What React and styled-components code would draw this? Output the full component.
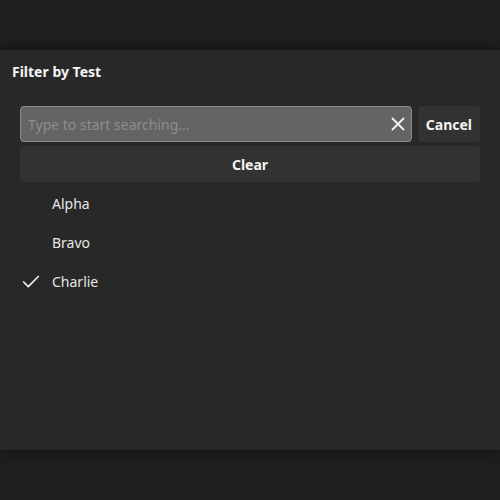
import React, { useState } from 'react';
import styled, { createGlobalStyle } from 'styled-components';
import { Check, X } from 'lucide-react';

const GlobalStyle = createGlobalStyle`
  html, body {
    margin: 0;
    padding: 0;
    background-color: #1f1f1f;
    font-family: "Noto Sans", "Open Sans", sans-serif;
  }
`;

const Page = styled.div`
  height: 100vh;
  display: flex;
  align-items: center;
`;

const Dialog = styled.div`
  width: 100%;
  height: 400px;
  background-color: #282828;
  box-shadow: 0 0 14px rgba(0, 0, 0, 0.55);
  display: flex;
  flex-direction: column;
`;

const Header = styled.div`
  padding: 12px 12px 12px;
`;

const Title = styled.h2`
  margin: 0;
  font-size: 14px;
  line-height: 20px;
  font-weight: 700;
  color: #f4f4f4;
`;

const Body = styled.div`
  padding: 12px 20px;
  display: flex;
  flex-direction: column;
`;

const SearchRow = styled.div`
  display: flex;
  gap: 6px;
`;

const InputWrap = styled.div`
  flex: 1;
  display: flex;
  align-items: center;
  height: 36px;
  box-sizing: border-box;
  background-color: #646464;
  border: 1px solid #8c8c8c;
  border-radius: 4px;
`;

const Input = styled.input`
  flex: 1;
  min-width: 0;
  height: 100%;
  background: transparent;
  border: none;
  outline: none;
  padding: 0 7px;
  font-family: inherit;
  font-size: 14px;
  color: #f0f0f0;

  &::placeholder {
    color: #8d8d8d;
  }
`;

const ClearIcon = styled.button`
  background: transparent;
  border: none;
  padding: 0;
  margin-right: 2px;
  width: 22px;
  height: 22px;
  display: flex;
  align-items: center;
  justify-content: center;
  color: #f2f2f2;
  cursor: pointer;
`;

const Button = styled.button`
  height: 36px;
  padding: 0 8px;
  margin-top: ${(p) => (p.$wide ? '4px' : '0')};
  background-color: #323232;
  border: none;
  border-radius: 4px;
  color: #f2f2f2;
  font-family: inherit;
  font-size: 14px;
  font-weight: 700;
  cursor: pointer;
  width: ${(p) => (p.$wide ? '100%' : 'auto')};
`;

const List = styled.ul`
  list-style: none;
  margin: 2px 0 0;
  padding: 0;
`;

const Item = styled.li`
  display: flex;
  align-items: center;
  height: 39px;
  font-size: 14px;
  color: #e6e6e6;
  cursor: pointer;
`;

const Mark = styled.span`
  width: 32px;
  display: flex;
  align-items: center;
  color: #f0f0f0;
`;

const options = ['Alpha', 'Bravo', 'Charlie'];

export default function App() {
  const [query, setQuery] = useState('');
  const [selected, setSelected] = useState(['Charlie']);

  const toggle = (name) =>
    setSelected((s) => (s.includes(name) ? s.filter((x) => x !== name) : [...s, name]));

  return (
    <>
      <GlobalStyle />
      <Page>
        <Dialog>
          <Header>
            <Title>Filter by Test</Title>
          </Header>
          <Body>
            <SearchRow>
              <InputWrap>
                <Input
                  placeholder="Type to start searching..."
                  value={query}
                  onChange={(e) => setQuery(e.target.value)}
                />
                <ClearIcon onClick={() => setQuery('')}>
                  <X size={22} strokeWidth={2} />
                </ClearIcon>
              </InputWrap>
              <Button>Cancel</Button>
            </SearchRow>
            <Button $wide onClick={() => setSelected([])}>Clear</Button>
            <List>
              {options
                .filter((o) => o.toLowerCase().includes(query.toLowerCase()))
                .map((o) => (
                  <Item key={o} onClick={() => toggle(o)}>
                    <Mark>{selected.includes(o) && <Check size={22} strokeWidth={1.8} />}</Mark>
                    {o}
                  </Item>
                ))}
            </List>
          </Body>
        </Dialog>
      </Page>
    </>
  );
}
